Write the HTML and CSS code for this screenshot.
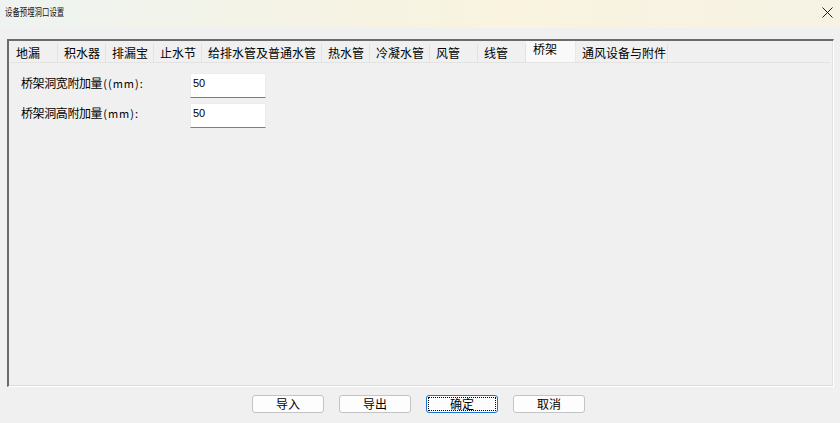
FILE: index.html
```html
<!DOCTYPE html>
<html lang="zh-CN">

<head>
    <meta charset="UTF-8">
    <title>设备预埋洞口设置</title>
    <link rel="stylesheet" href="styles.css">
</head>

<body>
    <div class="titlebar">
        <span class="title">设备预埋洞口设置</span>
        <svg class="close" width="11" height="11" viewBox="0 0 11 11">
            <path d="M0.5 0.5 L10.5 10.5 M10.5 0.5 L0.5 10.5" stroke="#222" stroke-width="1" fill="none" />
        </svg>
    </div>

    <div class="panel">
        <div class="panel-inner">
            <div class="tabs">
                <div class="tab" style="width: 48px">地漏</div>
                <div class="tab" style="width: 48px">积水器</div>
                <div class="tab" style="width: 48px">排漏宝</div>
                <div class="tab" style="width: 48px">止水节</div>
                <div class="tab" style="width: 120px">给排水管及普通水管</div>
                <div class="tab" style="width: 48px">热水管</div>
                <div class="tab" style="width: 60px">冷凝水管</div>
                <div class="tab" style="width: 48px">风管</div>
                <div class="tab" style="width: 48px">线管</div>
                <div class="tab active" style="width: 50px">桥架</div>
                <div class="tab" style="width: 92px">通风设备与附件</div>
            </div>

            <div class="form">
                <label class="field-label">桥架洞宽附加量<span class="unit">((mm):</span></label>
                <div class="field-input">50</div>
                <label class="field-label">桥架洞高附加量<span class="unit">(mm):</span></label>
                <div class="field-input">50</div>
            </div>
        </div>
    </div>

    <div class="buttons">
        <button class="btn">导入</button>
        <button class="btn">导出</button>
        <button class="btn default"><span class="focus">确定</span></button>
        <button class="btn">取消</button>
    </div>
</body>

</html>
```

FILE: styles.css
```css
body {
    margin: 0;
    background-color: #f0f0f0;
    font-family: "Noto Sans CJK SC", "Liberation Sans", sans-serif;
    font-size: 12px;
    color: #000;
    width: 840px;
    height: 423px;
    overflow: hidden;
}

/* title bar */
.titlebar {
    height: 28px;
    display: flex;
    align-items: center;
    justify-content: space-between;
    padding: 0 7px 0 5px;
    background: linear-gradient(90deg, #eef3f1 0%, #f5f3e6 35%, #f9f3df 60%, #f6f2e4 100%);
}

.title {
    display: inline-block;
    font-size: 10px;
    line-height: 14px;
    margin-top: -4px;
    transform: scaleX(0.74);
    transform-origin: left center;
    color: #111;
}

.close {
    margin-top: -4px;
}

/* tab panel */
.panel {
    margin: 11px 6px 0 7px;
    height: 345px;
    border-top: 2px solid #6b6b6b;
    border-left: 2px solid #6b6b6b;
    border-right: 1px solid #ffffff;
    border-bottom: 1px solid #ffffff;
}

.panel-inner {
    height: 100%;
    box-sizing: border-box;
    border-right: 1px solid #e2e2e2;
    border-bottom: 1px solid #dcdcdc;
}

.tabs {
    display: flex;
    align-items: flex-end;
    height: 21px;
    margin: 0 2px 0 1px;
    border-bottom: 1px solid #e3e3e3;
}

.tab {
    height: 18px;
    box-sizing: border-box;
    padding-left: 6px;
    line-height: 18px;
    border-right: 1px solid #e2e2e2;
    white-space: nowrap;
    background: #f0f0f0;
}

.tab.active {
    height: 21px;
    line-height: 16px;
    padding-left: 7px;
    background: #f9f9f9;
    border-right: 1px solid #e8e8e8;
}

/* fields */
.form {
    display: grid;
    grid-template-columns: 169px 76px;
    row-gap: 5px;
    padding: 10px 0 0 12px;
}

.field-label {
    padding-top: 2px;
    line-height: 16px;
    letter-spacing: -0.4px;
    white-space: nowrap;
}

.unit {
    font-size: 11px;
    letter-spacing: 1px;
    margin-left: 1px;
}

.field-input {
    height: 25px;
    box-sizing: border-box;
    background: #ffffff;
    border: 1px solid #ececec;
    border-bottom: 1px solid #7e7e7e;
    padding: 2px 0 0 2px;
    line-height: 14px;
    font-family: "Liberation Sans", sans-serif;
    font-size: 11px;
}

/* bottom buttons */
.buttons {
    display: flex;
    justify-content: center;
    gap: 15px;
    margin-top: 8px;
    padding-right: 3px;
}

.btn {
    width: 72px;
    height: 18px;
    padding: 0;
    border: 1px solid #c4c4c4;
    border-radius: 3px;
    background: #fdfdfd;
    font-family: "Noto Sans CJK SC", sans-serif;
    font-size: 12px;
    line-height: 16px;
    color: #000;
}

.btn.default {
    border-color: #1a73d0;
    padding: 1px;
}

.focus {
    display: block;
    height: 100%;
    box-sizing: border-box;
    border: 1px dotted #000;
    line-height: 12px;
}
```
